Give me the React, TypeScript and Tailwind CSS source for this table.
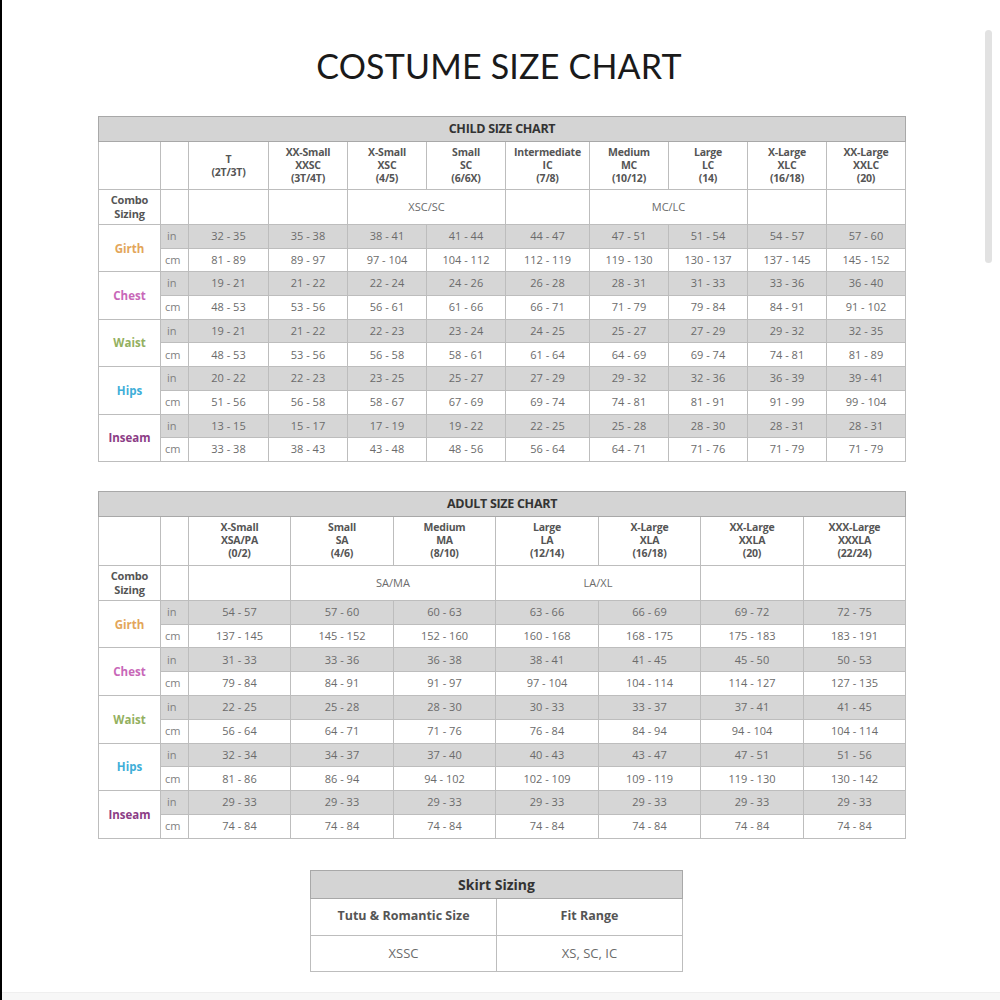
import React from 'react';

type Part = { label: string; color: string; inch: string[]; cm: string[] };

const CHILD_HEAD = [
  ['T', '(2T/3T)'],
  ['XX-Small', 'XXSC', '(3T/4T)'],
  ['X-Small', 'XSC', '(4/5)'],
  ['Small', 'SC', '(6/6X)'],
  ['Intermediate', 'IC', '(7/8)'],
  ['Medium', 'MC', '(10/12)'],
  ['Large', 'LC', '(14)'],
  ['X-Large', 'XLC', '(16/18)'],
  ['XX-Large', 'XXLC', '(20)'],
];

const ADULT_HEAD = [
  ['X-Small', 'XSA/PA', '(0/2)'],
  ['Small', 'SA', '(4/6)'],
  ['Medium', 'MA', '(8/10)'],
  ['Large', 'LA', '(12/14)'],
  ['X-Large', 'XLA', '(16/18)'],
  ['XX-Large', 'XXLA', '(20)'],
  ['XXX-Large', 'XXXLA', '(22/24)'],
];

const s = (t: string) => t.split(' ').map(v => v.replace('-', ' - '));

const CHILD: Part[] = [
  { label: 'Girth', color: 'text-[#e3a65a]', inch: s('32-35 35-38 38-41 41-44 44-47 47-51 51-54 54-57 57-60'), cm: s('81-89 89-97 97-104 104-112 112-119 119-130 130-137 137-145 145-152') },
  { label: 'Chest', color: 'text-[#c868b8]', inch: s('19-21 21-22 22-24 24-26 26-28 28-31 31-33 33-36 36-40'), cm: s('48-53 53-56 56-61 61-66 66-71 71-79 79-84 84-91 91-102') },
  { label: 'Waist', color: 'text-[#93b060]', inch: s('19-21 21-22 22-23 23-24 24-25 25-27 27-29 29-32 32-35'), cm: s('48-53 53-56 56-58 58-61 61-64 64-69 69-74 74-81 81-89') },
  { label: 'Hips', color: 'text-[#3eaed8]', inch: s('20-22 22-23 23-25 25-27 27-29 29-32 32-36 36-39 39-41'), cm: s('51-56 56-58 58-67 67-69 69-74 74-81 81-91 91-99 99-104') },
  { label: 'Inseam', color: 'text-[#8c3c86]', inch: s('13-15 15-17 17-19 19-22 22-25 25-28 28-30 28-31 28-31'), cm: s('33-38 38-43 43-48 48-56 56-64 64-71 71-76 71-79 71-79') },
];

const ADULT: Part[] = [
  { label: 'Girth', color: 'text-[#e3a65a]', inch: s('54-57 57-60 60-63 63-66 66-69 69-72 72-75'), cm: s('137-145 145-152 152-160 160-168 168-175 175-183 183-191') },
  { label: 'Chest', color: 'text-[#c868b8]', inch: s('31-33 33-36 36-38 38-41 41-45 45-50 50-53'), cm: s('79-84 84-91 91-97 97-104 104-114 114-127 127-135') },
  { label: 'Waist', color: 'text-[#93b060]', inch: s('22-25 25-28 28-30 30-33 33-37 37-41 41-45'), cm: s('56-64 64-71 71-76 76-84 84-94 94-104 104-114') },
  { label: 'Hips', color: 'text-[#3eaed8]', inch: s('32-34 34-37 37-40 40-43 43-47 47-51 51-56'), cm: s('81-86 86-94 94-102 102-109 109-119 119-130 130-142') },
  { label: 'Inseam', color: 'text-[#8c3c86]', inch: s('29-33 29-33 29-33 29-33 29-33 29-33 29-33'), cm: s('74-84 74-84 74-84 74-84 74-84 74-84 74-84') },
];

const cell = 'border border-[#bdbdbd]';

function SizeTable({ title, head, combo, parts, colW, headH, rowH }: {
  title: string;
  head: string[][];
  combo: { text: string; span: number }[];
  parts: Part[];
  colW: number[];
  headH: number;
  rowH: number;
}) {
  return (
    <table className="table-fixed border-collapse border border-[#a8a8a8] text-[11px] text-[#6b6b6b]">
      <colgroup>
        <col className="w-[62px]" />
        <col className="w-[28px]" />
        {colW.map((w, i) => <col key={i} style={{ width: w }} />)}
      </colgroup>
      <tbody>
        <tr className="h-[25px] bg-[#d4d4d4]">
          <td colSpan={2 + head.length} className="border border-[#a8a8a8] text-center text-[12.5px] font-bold text-[#333] tracking-[-0.3px]">{title}</td>
        </tr>
        <tr style={{ height: headH }}>
          <td className={cell} />
          <td className={cell} />
          {head.map((h, i) => (
            <td key={i} className={`${cell} text-center align-middle font-bold text-[#555] leading-[13px] text-[10.5px] tracking-[-0.2px]`}>
              {h.map((l, j) => <div key={j}>{l}</div>)}
            </td>
          ))}
        </tr>
        <tr className="h-[35px]">
          <td className={`${cell} text-center font-bold text-[#555] leading-[14px] text-[11px] tracking-[-0.2px]`}>Combo<br />Sizing</td>
          <td className={cell} />
          {combo.map((c, i) => (
            <td key={i} colSpan={c.span} className={`${cell} text-center text-[#6b6b6b]`}>{c.text}</td>
          ))}
        </tr>
        {parts.map(p => (
          <React.Fragment key={p.label}>
            <tr style={{ height: rowH }}>
              <td rowSpan={2} className={`${cell} bg-white text-center font-bold text-[11.5px] ${p.color}`}>{p.label}</td>
              <td className={`${cell} bg-[#d6d6d6] pl-[6px] text-[#808080]`}>in</td>
              {p.inch.map((v, i) => <td key={i} className={`${cell} bg-[#d6d6d6] text-center`}>{v}</td>)}
            </tr>
            <tr style={{ height: rowH }}>
              <td className={`${cell} pl-[4px] text-[#808080]`}>cm</td>
              {p.cm.map((v, i) => <td key={i} className={`${cell} text-center`}>{v}</td>)}
            </tr>
          </React.Fragment>
        ))}
      </tbody>
    </table>
  );
}

export default function App() {
  return (
    <div className="relative h-[1000px] w-[1000px] overflow-hidden bg-white border-l-2 border-black" style={{ fontFamily: '"Open Sans", "Liberation Sans", sans-serif' }}>
      <h1 className="pt-[44px] text-center text-[34px] font-normal leading-[44px] tracking-[0.2px] text-[#1a1a1a] pr-[4px]" style={{ fontFamily: 'Lato, "Liberation Sans", sans-serif' }}>
        COSTUME SIZE CHART
      </h1>

      <div className="mt-[28px] ml-[96px]">
        <SizeTable
          title="CHILD SIZE CHART"
          head={CHILD_HEAD}
          combo={[
            { text: '', span: 1 }, { text: '', span: 1 }, { text: 'XSC/SC', span: 2 },
            { text: '', span: 1 }, { text: 'MC/LC', span: 2 }, { text: '', span: 1 }, { text: '', span: 1 },
          ]}
          parts={CHILD}
          colW={[80, 79, 79, 79, 84, 79, 79, 79, 79]}
          headH={48}
          rowH={23.7}
        />
      </div>

      <div className="mt-[29px] ml-[96px]">
        <SizeTable
          title="ADULT SIZE CHART"
          head={ADULT_HEAD}
          combo={[
            { text: '', span: 1 }, { text: 'SA/MA', span: 2 }, { text: 'LA/XL', span: 2 },
            { text: '', span: 1 }, { text: '', span: 1 },
          ]}
          parts={ADULT}
          colW={[102, 103, 102, 103, 102, 103, 102]}
          headH={49}
          rowH={23.8}
        />
      </div>

      <div className="mt-[31px] ml-[308px] w-[373px]">
        <table className="w-full table-fixed border-collapse border border-[#a8a8a8] text-[#6b6b6b]">
          <tbody>
            <tr className="h-[28px] bg-[#d4d4d4]">
              <td colSpan={2} className="border border-[#a8a8a8] text-center text-[14px] font-bold text-[#333]">Skirt Sizing</td>
            </tr>
            <tr className="h-[37px]">
              <td className={`${cell} w-[186px] text-center text-[12.5px] font-bold text-[#555]`}>Tutu &amp; Romantic Size</td>
              <td className={`${cell} text-center text-[12.5px] font-bold text-[#555]`}>Fit Range</td>
            </tr>
            <tr className="h-[36px]">
              <td className={`${cell} text-center text-[13px]`}>XSSC</td>
              <td className={`${cell} text-center text-[13px]`}>XS, SC, IC</td>
            </tr>
          </tbody>
        </table>
      </div>

      <div className="absolute left-0 right-0 bottom-0 h-[8px] bg-[#f7f7f7] border-t border-[#efefef]" />
      <div className="absolute left-0 right-0 top-[973px] h-[19px] bg-white" />
      <div className="absolute right-[8px] top-[30px] h-[233px] w-[7px] rounded-full bg-[#e2e2e2]" />
    </div>
  );
}
